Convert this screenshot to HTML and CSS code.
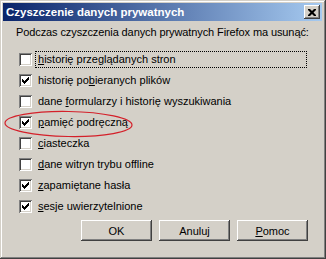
FILE: index.html
```html
<!DOCTYPE html>
<html lang="pl">
<head>
    <meta charset="UTF-8">
    <title>Czyszczenie danych prywatnych</title>
    <link rel="stylesheet" href="styles.css">
</head>
<body>
    <div class="window">
        <div class="title-bar">
            <span class="title">Czyszczenie danych prywatnych</span>
            <span class="close-btn">
                <svg width="8" height="7" viewBox="0 0 8 7">
                    <path d="M0 0h2l2 2 2-2h2v1l-2.5 2.5 2.5 2.5v1h-2l-2-2-2 2h-2v-1l2.5-2.5-2.5-2.5z" fill="#000"/>
                </svg>
            </span>
        </div>

        <div class="content">
            <p class="intro">Podczas czyszczenia danych prywatnych Firefox ma usunąć:</p>

            <ul class="options">
                <li class="option focused"><span class="box"></span><span class="label"><u>h</u>istorię przeglądanych stron</span></li>
                <li class="option"><span class="box checked"></span><span class="label">historię po<u>b</u>ieranych plików</span></li>
                <li class="option"><span class="box"></span><span class="label">dane <u>f</u>ormularzy i historię wyszukiwania</span></li>
                <li class="option"><span class="box checked"></span><span class="label"><u>p</u>amięć podręczną</span></li>
                <li class="option"><span class="box"></span><span class="label"><u>c</u>iasteczka</span></li>
                <li class="option"><span class="box"></span><span class="label"><u>d</u>ane witryn trybu offline</span></li>
                <li class="option"><span class="box checked"></span><span class="label"><u>z</u>apamiętane hasła</span></li>
                <li class="option"><span class="box checked"></span><span class="label"><u>s</u>esje uwierzytelnione</span></li>
            </ul>

            <div class="buttons">
                <button class="btn">OK</button>
                <button class="btn">Anuluj</button>
                <button class="btn"><u>P</u>omoc</button>
            </div>
        </div>

        <!-- czerwone zaznaczenie -->
        <svg class="mark" width="136" height="30" viewBox="0 0 136 30">
            <ellipse cx="68.5" cy="15" rx="63.5" ry="12.5" fill="none" stroke="#d4202a" stroke-width="1.2" transform="rotate(1 68.5 15)"/>
        </svg>
    </div>
</body>
</html>
```

FILE: styles.css
```css
* {
    margin: 0;
    padding: 0;
    box-sizing: border-box;
}

body {
    font-family: "Liberation Sans", Arial, sans-serif;
    font-size: 11px;
    color: #000;
}

/* Okno */
.window {
    position: relative;
    width: 326px;
    height: 259px;
    background-color: #d4d0c8;
    padding: 3px 4px 4px 3px;
    box-shadow: inset -1px -1px #404040, inset 1px 1px #d4d0c8, inset -2px -2px #808080, inset 2px 2px #fff;
    display: flex;
    flex-direction: column;
}

.title-bar {
    height: 18px;
    background: linear-gradient(to right, #0a246a, #a6caf0);
    display: flex;
    justify-content: space-between;
    align-items: center;
    padding: 0 2px 0 3px;
}

.title {
    color: #fff;
    font-weight: bold;
    font-size: 11.5px;
}

.close-btn {
    width: 16px;
    height: 14px;
    background-color: #d4d0c8;
    box-shadow: inset -1px -1px #404040, inset 1px 1px #fff, inset -2px -2px #808080;
    display: flex;
    justify-content: center;
    align-items: center;
}

.content {
    padding: 4px 0 0 13px;
}

.intro {
    line-height: 14px;
    margin-bottom: 10px;
    white-space: nowrap;
    letter-spacing: -0.1px;
}

/* Pola wyboru */
.options {
    list-style: none;
}

.option {
    height: 21px;
    display: flex;
    align-items: center;
    padding-left: 3px;
    white-space: nowrap;
}

.box {
    width: 13px;
    height: 13px;
    background: #fff;
    box-shadow: inset 1px 1px #808080, inset -1px -1px #fff, inset 2px 2px #404040, inset -2px -2px #d4d0c8;
    margin-right: 3px;
    flex-shrink: 0;
}

.box.checked {
    background: #fff url("data:image/svg+xml,%3Csvg xmlns='http://www.w3.org/2000/svg' width='13' height='13'%3E%3Cpath d='M3 5h1v1h1v1h1V6h1V5h1V4h1V3h1v3H9v1H8v1H7v1H6v1H5V9H4V8H3z' fill='%23000'/%3E%3C/svg%3E") no-repeat;
}

.label {
    padding: 1px 2px;
    border: 1px solid transparent;
    line-height: 13px;
}

.focused .label {
    border: 1px dotted #000;
    width: 272px;
}

/* Przyciski */
.buttons {
    display: flex;
    justify-content: flex-end;
    gap: 7px;
    margin-top: 3px;
    padding-right: 14px;
}

.btn {
    width: 71px;
    height: 21px;
    font-family: inherit;
    font-size: 11px;
    background-color: #d4d0c8;
    border: none;
    box-shadow: inset -1px -1px #404040, inset 1px 1px #fff, inset -2px -2px #808080, inset 2px 2px #d4d0c8;
}

.mark {
    position: absolute;
    left: 0;
    top: 109px;
}
```
